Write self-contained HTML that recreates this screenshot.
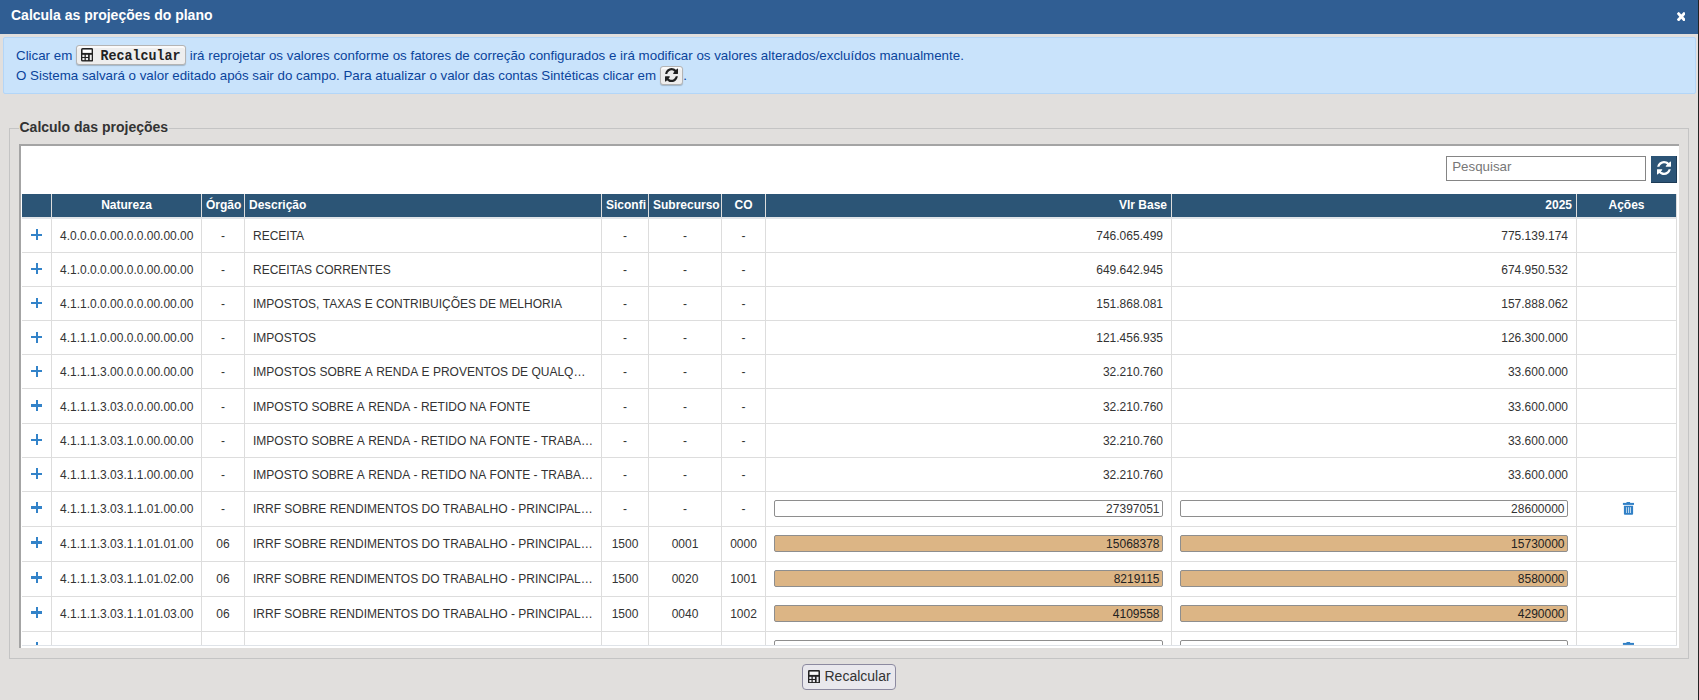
<!DOCTYPE html>
<html><head><meta charset="utf-8">
<style>
*{box-sizing:border-box}
html,body{margin:0;padding:0}
body{width:1699px;height:700px;overflow:hidden;position:relative;background:#e1dfdd;font-family:"Liberation Sans",sans-serif;color:#333}
.abs{position:absolute}
#title{left:0;top:0;width:1698px;height:33.5px;background:#305e93;color:#fff;font-weight:bold;font-size:14px;line-height:16px}
#title .t{position:absolute;left:11px;top:7px}
#close{position:absolute;left:1676.9px;top:12px;width:8.6px;height:9.4px}
#rline{left:1698px;top:0;width:1px;height:700px;background:#222}
#info{left:3px;top:37px;width:1693px;height:57px;background:#c9e3fb;border:1px solid #b3d6f8;border-radius:2px;color:#0a449c;font-size:13.33px;line-height:20px}
#info .l1{position:absolute;left:12px;top:7.5px;white-space:nowrap}
#info .l2{position:absolute;left:12px;top:27.5px;white-space:nowrap}
.kbd{display:inline-block;position:relative;vertical-align:top;background:#eee;border:1px solid #b4b4b4;border-radius:3px;box-shadow:0 1px 1px rgba(0,0,0,.2),inset 0 2px 0 0 rgba(255,255,255,.7);color:#222}
.k1{width:110px;height:20px;margin-top:-1px}
.k2{width:23.5px;height:19.3px;margin-top:0.3px}
.mono{position:absolute;left:23.5px;top:3.5px;font-family:"Liberation Mono",monospace;font-weight:bold;font-size:13.33px;line-height:16px;transform:scaleY(1.15);transform-origin:0 11.5px}
#fs{left:9px;top:128px;width:1680px;height:531px;border:1px solid #c4c4c4}
#legend{left:18.5px;top:119px;font-weight:bold;font-size:14px;color:#333;background:#e1dfdd;padding:0 0.5px 0 1px;line-height:16px}
#panel{left:19px;top:144px;width:1660px;height:504px;background:#fff;border-top:2px solid #a4a4a4;border-left:2px solid #a4a4a4}
#search{left:1446px;top:156px;width:200px;height:25px;border:1px solid #858585;background:#fff;color:#777;font-size:13.33px}
#search span{position:absolute;left:5.2px;top:1.5px}
#rbtn{left:1651px;top:156px;width:26px;height:27px;background:#2c5476;border-right:1px solid #1c3a55;border-bottom:1px solid #1c3a55}
#scroll{left:22px;top:194px;width:1655px;height:452px;overflow:hidden;border-bottom:1px solid #dfe3e8}
table{border-collapse:separate;border-spacing:0;table-layout:fixed;width:1655px;font-size:12px}
th{background:#2c5576;color:#fff;font-weight:bold;height:24.5px;padding:0 4px;border-left:1px solid #ddd;border-bottom:2px solid #e2e5e9;line-height:15px;white-space:nowrap;overflow:hidden}
th:first-child,td:first-child{border-left:0}
th:last-child,td:last-child{border-right:1px solid #ddd}
td{padding:2px 8px 0;height:34.2px;border-left:1px solid #ddd;border-bottom:1px solid #ddd;white-space:nowrap;overflow:hidden;line-height:17px;color:#333}
td.e{text-overflow:ellipsis}
tr.inp td{height:35px;padding-top:0}
.c{text-align:center}
.r{text-align:right}
.plus{display:inline-block;width:11px;height:11px;position:relative;vertical-align:middle;top:-1.5px}
.plus:before{content:"";position:absolute;left:0.3px;top:4.1px;width:10.8px;height:2.2px;background:#3383c9}
.plus:after{content:"";position:absolute;left:4.5px;top:-0.3px;width:2.4px;height:10.9px;background:#3383c9}
.in{display:block;position:relative;top:-0.4px;height:17.5px;border:1px solid #8e8e8e;border-radius:2px;background:#fff;text-align:right;padding-right:2.5px;line-height:16px;color:#333}
.trash{display:block;margin:0 auto;position:relative;left:1.5px;top:-1px}
.w{display:inline-block;font-weight:normal}
.in.tan{background:#dcb585;color:#222}
#recalc{left:802px;top:664px;width:94px;height:26px;border:1px solid #8c8aa0;border-radius:4px;background:#e9e8ed;color:#333;font-size:14px}
</style></head><body>
<div id="title" class="abs"><span class="t">Calcula as projeções do plano</span>
<svg id="close" viewBox="110 258 1188 1188" preserveAspectRatio="none"><path fill="#fff" d="M1298 1214q0 40-28 68l-136 136q-28 28-68 28t-68-28L704 1124l-294 294q-28 28-68 28t-68-28L138 1282q-28-28-28-68t28-68l294-294L138 558q-28-28-28-68t28-68l136-136q28-28 68-28t68 28l294 294 294-294q28-28 68-28t68 28l136 136q28 28 28 68t-28 68L976 852l294 294q28 28 28 68z"/></svg>
</div>
<div id="rline" class="abs"></div>
<div id="info" class="abs">
<div class="l1">Clicar em <span class="kbd k1"><svg width="12.2" height="13.6" viewBox="0 0 11.7 13.6" preserveAspectRatio="none" style="position:absolute;left:3.6px;top:2.8px"><rect x="0" y="0" width="11.7" height="13.6" rx="1.6" fill="#222"/><rect x="1.5" y="1.6" width="8.7" height="3.3" fill="#fff"/><rect x="1.3" y="6.8" width="2.1" height="2.2" fill="#eee"/><rect x="4.6" y="6.8" width="2.2" height="2.2" fill="#eee"/><rect x="1.3" y="10" width="2.1" height="2.1" fill="#eee"/><rect x="4.6" y="10" width="2.2" height="2.1" fill="#eee"/><rect x="8.4" y="6.8" width="1.9" height="5.3" fill="#eee"/></svg><span class="mono">Recalcular</span></span> irá reprojetar os valores conforme os fatores de correção configurados e irá modificar os valores alterados/excluídos manualmente.</div>
<div class="l2">O Sistema salvará o valor editado após sair do campo. Para atualizar o valor das contas Sintéticas clicar em <span class="kbd k2"><svg width="13" height="14.2" viewBox="0 0 1536 1536" preserveAspectRatio="none" style="position:absolute;left:4.4px;top:0.9px"><path fill="#222" d="M1511 928q0 5-1 7-64 268-268 434.5T764 1536q-146 0-282.5-55T238 1324l-129 129q-19 19-45 19t-45-19-19-45V960q0-26 19-45t45-19h448q26 0 45 19t19 45-19 45l-137 137q71 66 161 102t187 36q134 0 250-65t186-179q11-17 53-117 8-23 30-23h192q13 0 22.5 9.5t9.5 22.5zm25-800v448q0 26-19 45t-45 19h-448q-26 0-45-19t-19-45 19-45l138-138Q969 256 768 256q-134 0-250 65T332 500q-11 17-53 117-8 23-30 23H50q-13 0-22.5-9.5T18 608v-7q65-268 270-434.5T768 0q146 0 284 55.5T1297 212l130-129q19-19 45-19t45 19 19 45z"/></svg></span>.</div>
</div>
<div id="fs" class="abs"></div>
<div id="legend" class="abs">Calculo das projeções</div>
<div id="panel" class="abs"></div>
<div id="search" class="abs"><span>Pesquisar</span></div>
<div id="rbtn" class="abs"><svg width="14" height="14" viewBox="0 0 1536 1536" style="position:absolute;left:6px;top:4.8px"><path fill="#fff" d="M1511 928q0 5-1 7-64 268-268 434.5T764 1536q-146 0-282.5-55T238 1324l-129 129q-19 19-45 19t-45-19-19-45V960q0-26 19-45t45-19h448q26 0 45 19t19 45-19 45l-137 137q71 66 161 102t187 36q134 0 250-65t186-179q11-17 53-117 8-23 30-23h192q13 0 22.5 9.5t9.5 22.5zm25-800v448q0 26-19 45t-45 19h-448q-26 0-45-19t-19-45 19-45l138-138Q969 256 768 256q-134 0-250 65T332 500q-11 17-53 117-8 23-30 23H50q-13 0-22.5-9.5T18 608v-7q65-268 270-434.5T768 0q146 0 284 55.5T1297 212l130-129q19-19 45-19t45 19 19 45z"/></svg></div>
<div id="scroll" class="abs">
<table>
<colgroup><col style="width:29px"><col style="width:150px"><col style="width:43px"><col style="width:357px"><col style="width:47px"><col style="width:73px"><col style="width:44px"><col style="width:406px"><col style="width:405px"><col style="width:101px"></colgroup>
<thead><tr><th></th><th class="c">Natureza</th><th class="c">Órgão</th><th style="text-align:left">Descrição</th><th class="c">Siconfi</th><th class="c">Subrecurso</th><th class="c">CO</th><th class="r">Vlr Base</th><th class="r">2025</th><th class="c">Ações</th></tr></thead>
<tbody>
<tr><td class="c"><i class="plus"></i></td><td>4.0.0.0.0.00.0.0.00.00.00</td><td class="c">-</td><td class="e">RECEITA</td><td class="c">-</td><td class="c">-</td><td class="c">-</td><td class="r">746.065.499</td><td class="r">775.139.174</td><td></td></tr>
<tr><td class="c"><i class="plus"></i></td><td>4.1.0.0.0.00.0.0.00.00.00</td><td class="c">-</td><td class="e"><b class="w">RECEITAS</b> <b class="w">CORRENTES</b></td><td class="c">-</td><td class="c">-</td><td class="c">-</td><td class="r">649.642.945</td><td class="r">674.950.532</td><td></td></tr>
<tr><td class="c"><i class="plus"></i></td><td>4.1.1.0.0.00.0.0.00.00.00</td><td class="c">-</td><td class="e"><b class="w">IMPOSTOS,</b> <b class="w">TAXAS</b> <b class="w">E</b> <b class="w">CONTRIBUIÇÕES</b> <b class="w">DE</b> <b class="w">MELHORIA</b></td><td class="c">-</td><td class="c">-</td><td class="c">-</td><td class="r">151.868.081</td><td class="r">157.888.062</td><td></td></tr>
<tr><td class="c"><i class="plus"></i></td><td>4.1.1.1.0.00.0.0.00.00.00</td><td class="c">-</td><td class="e">IMPOSTOS</td><td class="c">-</td><td class="c">-</td><td class="c">-</td><td class="r">121.456.935</td><td class="r">126.300.000</td><td></td></tr>
<tr><td class="c"><i class="plus"></i></td><td>4.1.1.1.3.00.0.0.00.00.00</td><td class="c">-</td><td class="e"><b class="w">IMPOSTOS</b> <b class="w">SOBRE</b> <b class="w">A</b> <b class="w">RENDA</b> <b class="w">E</b> <b class="w">PROVENTOS</b> <b class="w">DE</b> <b class="w">QUALQ…</b></td><td class="c">-</td><td class="c">-</td><td class="c">-</td><td class="r">32.210.760</td><td class="r">33.600.000</td><td></td></tr>
<tr><td class="c"><i class="plus"></i></td><td>4.1.1.1.3.03.0.0.00.00.00</td><td class="c">-</td><td class="e"><b class="w">IMPOSTO</b> <b class="w">SOBRE</b> <b class="w">A</b> <b class="w">RENDA</b> <b class="w">-</b> <b class="w">RETIDO</b> <b class="w">NA</b> <b class="w">FONTE</b></td><td class="c">-</td><td class="c">-</td><td class="c">-</td><td class="r">32.210.760</td><td class="r">33.600.000</td><td></td></tr>
<tr><td class="c"><i class="plus"></i></td><td>4.1.1.1.3.03.1.0.00.00.00</td><td class="c">-</td><td class="e"><b class="w">IMPOSTO</b> <b class="w">SOBRE</b> <b class="w">A</b> <b class="w">RENDA</b> <b class="w">-</b> <b class="w">RETIDO</b> <b class="w">NA</b> <b class="w">FONTE</b> <b class="w">-</b> <b class="w">TRABA…</b></td><td class="c">-</td><td class="c">-</td><td class="c">-</td><td class="r">32.210.760</td><td class="r">33.600.000</td><td></td></tr>
<tr><td class="c"><i class="plus"></i></td><td>4.1.1.1.3.03.1.1.00.00.00</td><td class="c">-</td><td class="e"><b class="w">IMPOSTO</b> <b class="w">SOBRE</b> <b class="w">A</b> <b class="w">RENDA</b> <b class="w">-</b> <b class="w">RETIDO</b> <b class="w">NA</b> <b class="w">FONTE</b> <b class="w">-</b> <b class="w">TRABA…</b></td><td class="c">-</td><td class="c">-</td><td class="c">-</td><td class="r">32.210.760</td><td class="r">33.600.000</td><td></td></tr>
<tr class="inp"><td class="c"><i class="plus"></i></td><td>4.1.1.1.3.03.1.1.01.00.00</td><td class="c">-</td><td class="e"><b class="w">IRRF</b> <b class="w">SOBRE</b> <b class="w">RENDIMENTOS</b> <b class="w">DO</b> <b class="w">TRABALHO</b> <b class="w">-</b> <b class="w">PRINCIPAL…</b></td><td class="c">-</td><td class="c">-</td><td class="c">-</td><td><span class="in">27397051</span></td><td><span class="in">28600000</span></td><td class="c"><svg class="trash" width="16" height="16" viewBox="0 0 16 16"><rect x="6.5" y="2" width="3.6" height="1.4" fill="#3180c6"/><rect x="2.9" y="2.9" width="11.1" height="2" fill="#3180c6"/><path d="M3.9 5.7H13.1V13.7Q13.1 14.7 12.1 14.7H4.9Q3.9 14.7 3.9 13.7Z" fill="#3180c6"/><rect x="6.1" y="7.2" width="0.8" height="5.8" fill="#cfe3f5"/><rect x="8.0" y="7.2" width="0.9" height="5.8" fill="#cfe3f5"/><rect x="9.9" y="7.2" width="1.0" height="5.8" fill="#cfe3f5"/></svg></td></tr>
<tr class="inp"><td class="c"><i class="plus"></i></td><td>4.1.1.1.3.03.1.1.01.01.00</td><td class="c">06</td><td class="e"><b class="w">IRRF</b> <b class="w">SOBRE</b> <b class="w">RENDIMENTOS</b> <b class="w">DO</b> <b class="w">TRABALHO</b> <b class="w">-</b> <b class="w">PRINCIPAL…</b></td><td class="c">1500</td><td class="c">0001</td><td class="c">0000</td><td><span class="in tan">15068378</span></td><td><span class="in tan">15730000</span></td><td></td></tr>
<tr class="inp"><td class="c"><i class="plus"></i></td><td>4.1.1.1.3.03.1.1.01.02.00</td><td class="c">06</td><td class="e"><b class="w">IRRF</b> <b class="w">SOBRE</b> <b class="w">RENDIMENTOS</b> <b class="w">DO</b> <b class="w">TRABALHO</b> <b class="w">-</b> <b class="w">PRINCIPAL…</b></td><td class="c">1500</td><td class="c">0020</td><td class="c">1001</td><td><span class="in tan">8219115</span></td><td><span class="in tan">8580000</span></td><td></td></tr>
<tr class="inp"><td class="c"><i class="plus"></i></td><td>4.1.1.1.3.03.1.1.01.03.00</td><td class="c">06</td><td class="e"><b class="w">IRRF</b> <b class="w">SOBRE</b> <b class="w">RENDIMENTOS</b> <b class="w">DO</b> <b class="w">TRABALHO</b> <b class="w">-</b> <b class="w">PRINCIPAL…</b></td><td class="c">1500</td><td class="c">0040</td><td class="c">1002</td><td><span class="in tan">4109558</span></td><td><span class="in tan">4290000</span></td><td></td></tr>
<tr class="inp"><td class="c"><i class="plus"></i></td><td></td><td class="c"></td><td class="e"></td><td class="c"></td><td class="c"></td><td class="c"></td><td><span class="in"></span></td><td><span class="in"></span></td><td class="c"><svg class="trash" width="16" height="16" viewBox="0 0 16 16"><rect x="6.5" y="2" width="3.6" height="1.4" fill="#3180c6"/><rect x="2.9" y="2.9" width="11.1" height="2" fill="#3180c6"/><path d="M3.9 5.7H13.1V13.7Q13.1 14.7 12.1 14.7H4.9Q3.9 14.7 3.9 13.7Z" fill="#3180c6"/><rect x="6.1" y="7.2" width="0.8" height="5.8" fill="#cfe3f5"/><rect x="8.0" y="7.2" width="0.9" height="5.8" fill="#cfe3f5"/><rect x="9.9" y="7.2" width="1.0" height="5.8" fill="#cfe3f5"/></svg></td></tr>
</tbody></table>
</div>
<div id="recalc" class="abs"><svg width="12" height="13.6" viewBox="0 0 11.7 13.6" preserveAspectRatio="none" style="position:absolute;left:5px;top:4.5px"><rect x="0" y="0" width="11.7" height="13.6" rx="1.3" fill="#222"/><rect x="1.5" y="1.6" width="8.7" height="3.3" fill="#fafafa"/><rect x="1.3" y="6.8" width="2.1" height="2.2" fill="#e9e8ed"/><rect x="4.6" y="6.8" width="2.2" height="2.2" fill="#e9e8ed"/><rect x="1.3" y="10" width="2.1" height="2.1" fill="#e9e8ed"/><rect x="4.6" y="10" width="2.2" height="2.1" fill="#e9e8ed"/><rect x="8.4" y="6.8" width="1.9" height="5.3" fill="#e9e8ed"/></svg><span style="position:absolute;left:21.5px;top:2.5px;line-height:16px">Recalcular</span></div>
</body></html>
